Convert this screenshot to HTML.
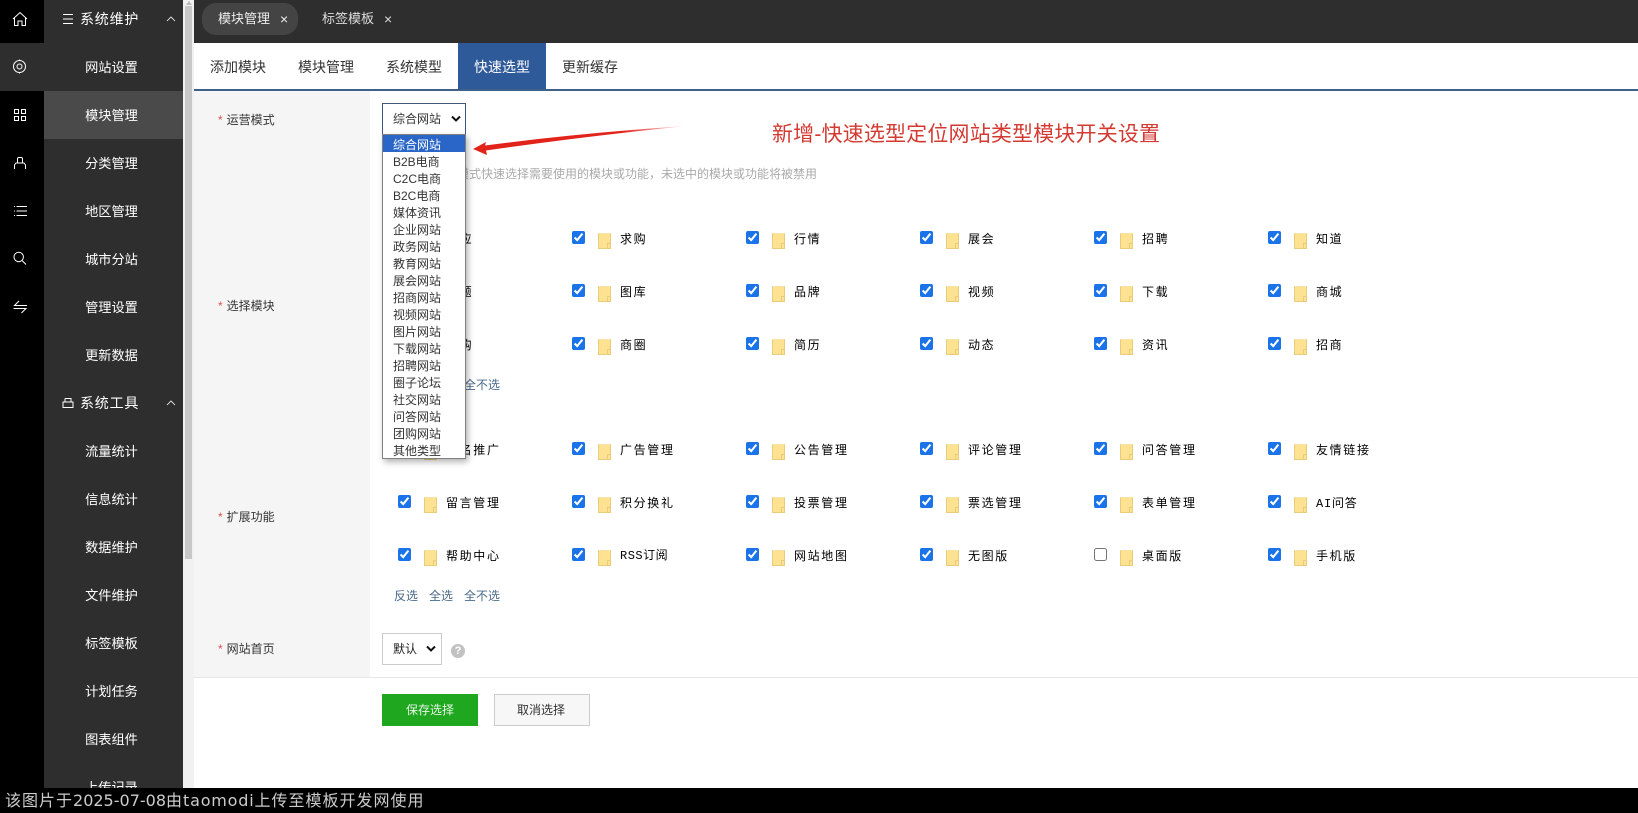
<!DOCTYPE html>
<html lang="zh"><head><meta charset="utf-8"><title>模块管理</title>
<style>
*{box-sizing:border-box;margin:0;padding:0}
html,body{width:1638px;height:813px;overflow:hidden;background:#fff;font-family:"Liberation Sans","Noto Sans CJK SC",sans-serif;font-size:12px;color:#222}
.a{position:absolute;white-space:nowrap;line-height:20px}
.box{position:absolute}
.nav{left:44px;width:135px;text-align:center;color:#fff;font-size:13.2px}
.head{color:#fff;font-size:14px;letter-spacing:.8px;left:80px}
.tab{top:57px;font-size:14px;color:#333}
.lab{left:218px;color:#333}
.lab i{color:#d9534f;font-style:normal;margin-right:4px}
input{position:absolute;width:13px;height:13px;accent-color:#1a73e8;margin:0}
.f{position:absolute;width:13px;height:16px;background:#fde391;border:1px solid #e8cc7a;border-top-color:#f6e4a6}
.f:after{content:"";position:absolute;right:0;bottom:0;width:2px;height:4px;border-left:1px solid #e8cc7a;border-top:1px solid #e8cc7a}
.t{position:absolute;white-space:nowrap;line-height:20px;font-family:"WenQuanYi Zen Hei","Noto Sans CJK SC",sans-serif;font-size:12px;letter-spacing:1.65px;color:#000}
.l{color:#4a6a8a}
.op{height:17px;line-height:20px;padding-left:10px;font-size:12px;color:#333}
svg{position:absolute;fill:none;stroke:#fff;stroke-width:1}
</style></head><body>

<!-- rail -->
<div class="box" style="left:0;top:0;width:44px;height:813px;background:#000"></div>
<div class="box" style="left:44px;top:0;width:139px;height:813px;background:#2e2e2e"></div>
<div class="box" style="left:0;top:43px;width:44px;height:48px;background:#2e2e2e"></div>
<div class="box" style="left:44px;top:91px;width:139px;height:48px;background:#4a4a4a"></div>
<div class="box" style="left:183px;top:0;width:11px;height:813px;background:#f1f1f1"></div>
<div class="box" style="left:185px;top:6px;width:7px;height:553px;background:#c8c8c8"></div>
<div class="box" style="left:186px;top:1px;width:0;height:0;border:3px solid transparent;border-top:0;border-bottom:4px solid #bbb"></div>

<svg style="left:12px;top:11px" width="16" height="16" viewBox="0 0 16 16"><path d="M1 8 L8 1.5 L15 8 M2.5 7 V14.5 H6 V10 H10 V14.5 H13.5 V7"/></svg>
<svg style="left:12px;top:59px" width="16" height="16" viewBox="0 0 16 16"><circle cx="7.5" cy="7.5" r="6"/><circle cx="7.5" cy="7.5" r="2.5"/><path d="M7.5 0.5V1.5M7.5 13.5V14.5"/></svg>
<svg style="left:12px;top:107px" width="16" height="16" viewBox="0 0 16 16"><path d="M2.5 2.5h4v4h-4zM9.5 2.5h4v4h-4zM2.5 9.5h4v4h-4zM9.5 9.5h4v4h-4z"/></svg>
<svg style="left:12px;top:155px" width="16" height="16" viewBox="0 0 16 16"><path d="M2.5 14 V10 L4 8 H12 L13.5 10 V14 M5.5 8 V4 Q5.5 2.5 7 2.5 H9 Q10.5 2.5 10.5 4 V8"/></svg>
<svg style="left:12px;top:203px" width="16" height="16" viewBox="0 0 16 16"><path d="M2 3.5h1M4.5 3.5H15M2 8h1M4.5 8H15M2 12.5h1M4.5 12.5H15"/></svg>
<svg style="left:12px;top:251px" width="16" height="16" viewBox="0 0 16 16"><circle cx="6.7" cy="6" r="4.7"/><path d="M10 9.5 L14 13.5"/></svg>
<svg style="left:12px;top:299px" width="16" height="16" viewBox="0 0 16 16"><path d="M7 2 L2.5 6.5 H15 M1.5 9.5 H14 L9.5 14"/></svg>

<!-- nav -->
<svg style="left:62px;top:13px" width="12" height="12" viewBox="0 0 12 12"><path d="M1 1.5H11M1 6H11M1 10.5H11"/></svg>
<div class="a head" style="top:9px">系统维护</div>
<svg style="left:165px;top:15px;stroke-width:.8" width="12" height="8" viewBox="0 0 12 8"><path d="M2 6 L6 2 L10 6"/></svg>
<div class="a nav" style="top:58px">网站设置</div>
<div class="a nav" style="top:106px">模块管理</div>
<div class="a nav" style="top:154px">分类管理</div>
<div class="a nav" style="top:202px">地区管理</div>
<div class="a nav" style="top:250px">城市分站</div>
<div class="a nav" style="top:298px">管理设置</div>
<div class="a nav" style="top:346px">更新数据</div>
<svg style="left:62px;top:397px" width="12" height="12" viewBox="0 0 12 12"><path d="M3 1.5H9V5M3 1.5V5M1 5H11V10.5H1Z"/></svg>
<div class="a head" style="top:393px">系统工具</div>
<svg style="left:165px;top:399px;stroke-width:.8" width="12" height="8" viewBox="0 0 12 8"><path d="M2 6 L6 2 L10 6"/></svg>
<div class="a nav" style="top:442px">流量统计</div>
<div class="a nav" style="top:490px">信息统计</div>
<div class="a nav" style="top:538px">数据维护</div>
<div class="a nav" style="top:586px">文件维护</div>
<div class="a nav" style="top:634px">标签模板</div>
<div class="a nav" style="top:682px">计划任务</div>
<div class="a nav" style="top:730px">图表组件</div>
<div class="a nav" style="top:778px">上传记录</div>

<!-- header -->
<div class="box" style="left:194px;top:0;width:1444px;height:43px;background:#2e2e2e"></div>
<div class="box" style="left:202px;top:3px;width:96px;height:32px;border-radius:14px;background:#444"></div>
<div class="a" style="left:218px;top:9px;color:#eee;font-size:13px">模块管理</div>
<div class="a" style="left:280px;top:9px;color:#eee;font-size:14px">×</div>
<div class="a" style="left:322px;top:9px;color:#ddd;font-size:13px">标签模板</div>
<div class="a" style="left:384px;top:9px;color:#ddd;font-size:14px">×</div>

<!-- sub tabs -->
<div class="box" style="left:194px;top:89px;width:1444px;height:2px;background:#3f6189"></div>
<div class="box" style="left:458px;top:43px;width:88px;height:46px;background:#2f5a9a"></div>
<div class="a tab" style="left:210px">添加模块</div>
<div class="a tab" style="left:298px">模块管理</div>
<div class="a tab" style="left:386px">系统模型</div>
<div class="a tab" style="left:474px;color:#fff">快速选型</div>
<div class="a tab" style="left:562px">更新缓存</div>

<!-- left column -->
<div class="box" style="left:194px;top:91px;width:176px;height:586px;background:#f5f5f5"></div>
<div class="box" style="left:194px;top:677px;width:1444px;height:1px;background:#e6e6e6"></div>
<div class="a lab" style="top:110px"><i>*</i>运营模式</div>
<div class="a lab" style="top:296px"><i>*</i>选择模块</div>
<div class="a lab" style="top:507px"><i>*</i>扩展功能</div>
<div class="a lab" style="top:639px"><i>*</i>网站首页</div>

<!-- hint + title -->
<div class="a" style="left:409px;top:164px;color:#aaa">根据运营模式快速选择需要使用的模块或功能，未选中的模块或功能将被禁用</div>
<div class="a" style="left:772px;top:123px;font-size:21px;line-height:24px;letter-spacing:.17px;color:#d33a32">新增-快速选型定位网站类型模块开关设置</div>

<!-- group 1 -->
<input type="checkbox" checked style="left:398px;top:231px"><span class="f" style="left:424px;top:233px"></span><span class="t" style="left:446px;top:229px">供应</span>
<input type="checkbox" checked style="left:572px;top:231px"><span class="f" style="left:598px;top:233px"></span><span class="t" style="left:620px;top:229px">求购</span>
<input type="checkbox" checked style="left:746px;top:231px"><span class="f" style="left:772px;top:233px"></span><span class="t" style="left:794px;top:229px">行情</span>
<input type="checkbox" checked style="left:920px;top:231px"><span class="f" style="left:946px;top:233px"></span><span class="t" style="left:968px;top:229px">展会</span>
<input type="checkbox" checked style="left:1094px;top:231px"><span class="f" style="left:1120px;top:233px"></span><span class="t" style="left:1142px;top:229px">招聘</span>
<input type="checkbox" checked style="left:1268px;top:231px"><span class="f" style="left:1294px;top:233px"></span><span class="t" style="left:1316px;top:229px">知道</span>

<input type="checkbox" checked style="left:398px;top:284px"><span class="f" style="left:424px;top:286px"></span><span class="t" style="left:446px;top:282px">专题</span>
<input type="checkbox" checked style="left:572px;top:284px"><span class="f" style="left:598px;top:286px"></span><span class="t" style="left:620px;top:282px">图库</span>
<input type="checkbox" checked style="left:746px;top:284px"><span class="f" style="left:772px;top:286px"></span><span class="t" style="left:794px;top:282px">品牌</span>
<input type="checkbox" checked style="left:920px;top:284px"><span class="f" style="left:946px;top:286px"></span><span class="t" style="left:968px;top:282px">视频</span>
<input type="checkbox" checked style="left:1094px;top:284px"><span class="f" style="left:1120px;top:286px"></span><span class="t" style="left:1142px;top:282px">下载</span>
<input type="checkbox" checked style="left:1268px;top:284px"><span class="f" style="left:1294px;top:286px"></span><span class="t" style="left:1316px;top:282px">商城</span>

<input type="checkbox" checked style="left:398px;top:337px"><span class="f" style="left:424px;top:339px"></span><span class="t" style="left:446px;top:335px">团购</span>
<input type="checkbox" checked style="left:572px;top:337px"><span class="f" style="left:598px;top:339px"></span><span class="t" style="left:620px;top:335px">商圈</span>
<input type="checkbox" checked style="left:746px;top:337px"><span class="f" style="left:772px;top:339px"></span><span class="t" style="left:794px;top:335px">简历</span>
<input type="checkbox" checked style="left:920px;top:337px"><span class="f" style="left:946px;top:339px"></span><span class="t" style="left:968px;top:335px">动态</span>
<input type="checkbox" checked style="left:1094px;top:337px"><span class="f" style="left:1120px;top:339px"></span><span class="t" style="left:1142px;top:335px">资讯</span>
<input type="checkbox" checked style="left:1268px;top:337px"><span class="f" style="left:1294px;top:339px"></span><span class="t" style="left:1316px;top:335px">招商</span>

<div class="a l" style="left:394px;top:375px">反选</div>
<div class="a l" style="left:429px;top:375px">全选</div>
<div class="a l" style="left:464px;top:375px">全不选</div>

<!-- group 2 -->
<input type="checkbox" checked style="left:398px;top:442px"><span class="f" style="left:424px;top:444px"></span><span class="t" style="left:446px;top:440px">排名推广</span>
<input type="checkbox" checked style="left:572px;top:442px"><span class="f" style="left:598px;top:444px"></span><span class="t" style="left:620px;top:440px">广告管理</span>
<input type="checkbox" checked style="left:746px;top:442px"><span class="f" style="left:772px;top:444px"></span><span class="t" style="left:794px;top:440px">公告管理</span>
<input type="checkbox" checked style="left:920px;top:442px"><span class="f" style="left:946px;top:444px"></span><span class="t" style="left:968px;top:440px">评论管理</span>
<input type="checkbox" checked style="left:1094px;top:442px"><span class="f" style="left:1120px;top:444px"></span><span class="t" style="left:1142px;top:440px">问答管理</span>
<input type="checkbox" checked style="left:1268px;top:442px"><span class="f" style="left:1294px;top:444px"></span><span class="t" style="left:1316px;top:440px">友情链接</span>

<input type="checkbox" checked style="left:398px;top:495px"><span class="f" style="left:424px;top:497px"></span><span class="t" style="left:446px;top:493px">留言管理</span>
<input type="checkbox" checked style="left:572px;top:495px"><span class="f" style="left:598px;top:497px"></span><span class="t" style="left:620px;top:493px">积分换礼</span>
<input type="checkbox" checked style="left:746px;top:495px"><span class="f" style="left:772px;top:497px"></span><span class="t" style="left:794px;top:493px">投票管理</span>
<input type="checkbox" checked style="left:920px;top:495px"><span class="f" style="left:946px;top:497px"></span><span class="t" style="left:968px;top:493px">票选管理</span>
<input type="checkbox" checked style="left:1094px;top:495px"><span class="f" style="left:1120px;top:497px"></span><span class="t" style="left:1142px;top:493px">表单管理</span>
<input type="checkbox" checked style="left:1268px;top:495px"><span class="f" style="left:1294px;top:497px"></span><span class="t" style="left:1316px;top:494px;letter-spacing:.8px;font-family:'Liberation Mono','WenQuanYi Zen Hei',monospace">AI问答</span>

<input type="checkbox" checked style="left:398px;top:548px"><span class="f" style="left:424px;top:550px"></span><span class="t" style="left:446px;top:546px">帮助中心</span>
<input type="checkbox" checked style="left:572px;top:548px"><span class="f" style="left:598px;top:550px"></span><span class="t" style="left:620px;top:546px;font-family:'Liberation Mono','WenQuanYi Zen Hei',monospace;letter-spacing:.5px">RSS订阅</span>
<input type="checkbox" checked style="left:746px;top:548px"><span class="f" style="left:772px;top:550px"></span><span class="t" style="left:794px;top:546px">网站地图</span>
<input type="checkbox" checked style="left:920px;top:548px"><span class="f" style="left:946px;top:550px"></span><span class="t" style="left:968px;top:546px">无图版</span>
<input type="checkbox" style="left:1094px;top:548px;accent-color:#666"><span class="f" style="left:1120px;top:550px"></span><span class="t" style="left:1142px;top:546px">桌面版</span>
<input type="checkbox" checked style="left:1268px;top:548px"><span class="f" style="left:1294px;top:550px"></span><span class="t" style="left:1316px;top:546px">手机版</span>

<div class="a l" style="left:394px;top:586px">反选</div>
<div class="a l" style="left:429px;top:586px">全选</div>
<div class="a l" style="left:464px;top:586px">全不选</div>

<!-- select 2 -->
<div class="box" style="left:382px;top:633px;width:60px;height:32px;border:1px solid #ccc;background:#fff"></div>
<div class="a" style="left:393px;top:639px">默认</div>
<svg style="left:426px;top:645px;stroke:#111;stroke-width:2" width="10" height="8" viewBox="0 0 10 8"><path d="M1 1.5 L5 5.5 L9 1.5"/></svg>
<div class="box" style="left:451px;top:644px;width:14px;height:14px;border-radius:50%;background:#c2c2c2;color:#fff;font-size:11px;font-weight:bold;line-height:14px;text-align:center">?</div>

<!-- buttons -->
<div class="box" style="left:382px;top:694px;width:96px;height:32px;background:#1fa81f;color:#e6f5e6;text-align:center;line-height:32px">保存选择</div>
<div class="box" style="left:494px;top:694px;width:96px;height:32px;background:#f7f7f7;border:1px solid #ccc;color:#333;text-align:center;line-height:30px;padding-right:2px">取消选择</div>

<!-- arrow -->
<svg style="left:470px;top:120px;stroke:none" width="220" height="40" viewBox="0 0 220 40"><defs><linearGradient id="g" x1="0" x2="1" y1="0" y2="0"><stop offset="0" stop-color="#e2231a"/><stop offset=".7" stop-color="#e2231a"/><stop offset="1" stop-color="#e2231a" stop-opacity=".1"/></linearGradient></defs><path fill="url(#g)" d="M3 29 L16 22 L15 25.5 Q110 13 216 6 Q110 17 16 30.5 L17 35 Z"/></svg>

<!-- select 1 + dropdown -->
<div class="box" style="left:382px;top:103px;width:84px;height:32px;border:1px solid #3f5a78;background:#fff"></div>
<div class="a" style="left:393px;top:109px;color:#333">综合网站</div>
<svg style="left:451px;top:115px;stroke:#111;stroke-width:2" width="10" height="8" viewBox="0 0 10 8"><path d="M1 1.5 L5 5.5 L9 1.5"/></svg>
<div class="box" style="left:382px;top:134px;width:84px;height:325px;background:#fff;border:1px solid #808080;box-shadow:2px 3px 6px rgba(0,0,0,.3)">
<div class="op" style="background:#2a66c8;color:#fff">综合网站</div>
<div class="op">B2B电商</div><div class="op">C2C电商</div><div class="op">B2C电商</div><div class="op">媒体资讯</div><div class="op">企业网站</div><div class="op">政务网站</div><div class="op">教育网站</div><div class="op">展会网站</div><div class="op">招商网站</div><div class="op">视频网站</div><div class="op">图片网站</div><div class="op">下载网站</div><div class="op">招聘网站</div><div class="op">圈子论坛</div><div class="op">社交网站</div><div class="op">问答网站</div><div class="op">团购网站</div><div class="op">其他类型</div>
</div>

<!-- bottom bar -->
<div class="box" style="left:0;top:788px;width:1638px;height:25px;background:#000"></div>
<div class="a" style="left:5px;top:788px;line-height:25px;font-size:16px;letter-spacing:1px;color:#ccc;font-family:'DejaVu Sans','Noto Sans CJK SC',sans-serif">该图片于<span style="letter-spacing:0">2025-07-08</span>由<span style="letter-spacing:.8px">taomodi</span>上传至模板开发网使用</div>
</body></html>
